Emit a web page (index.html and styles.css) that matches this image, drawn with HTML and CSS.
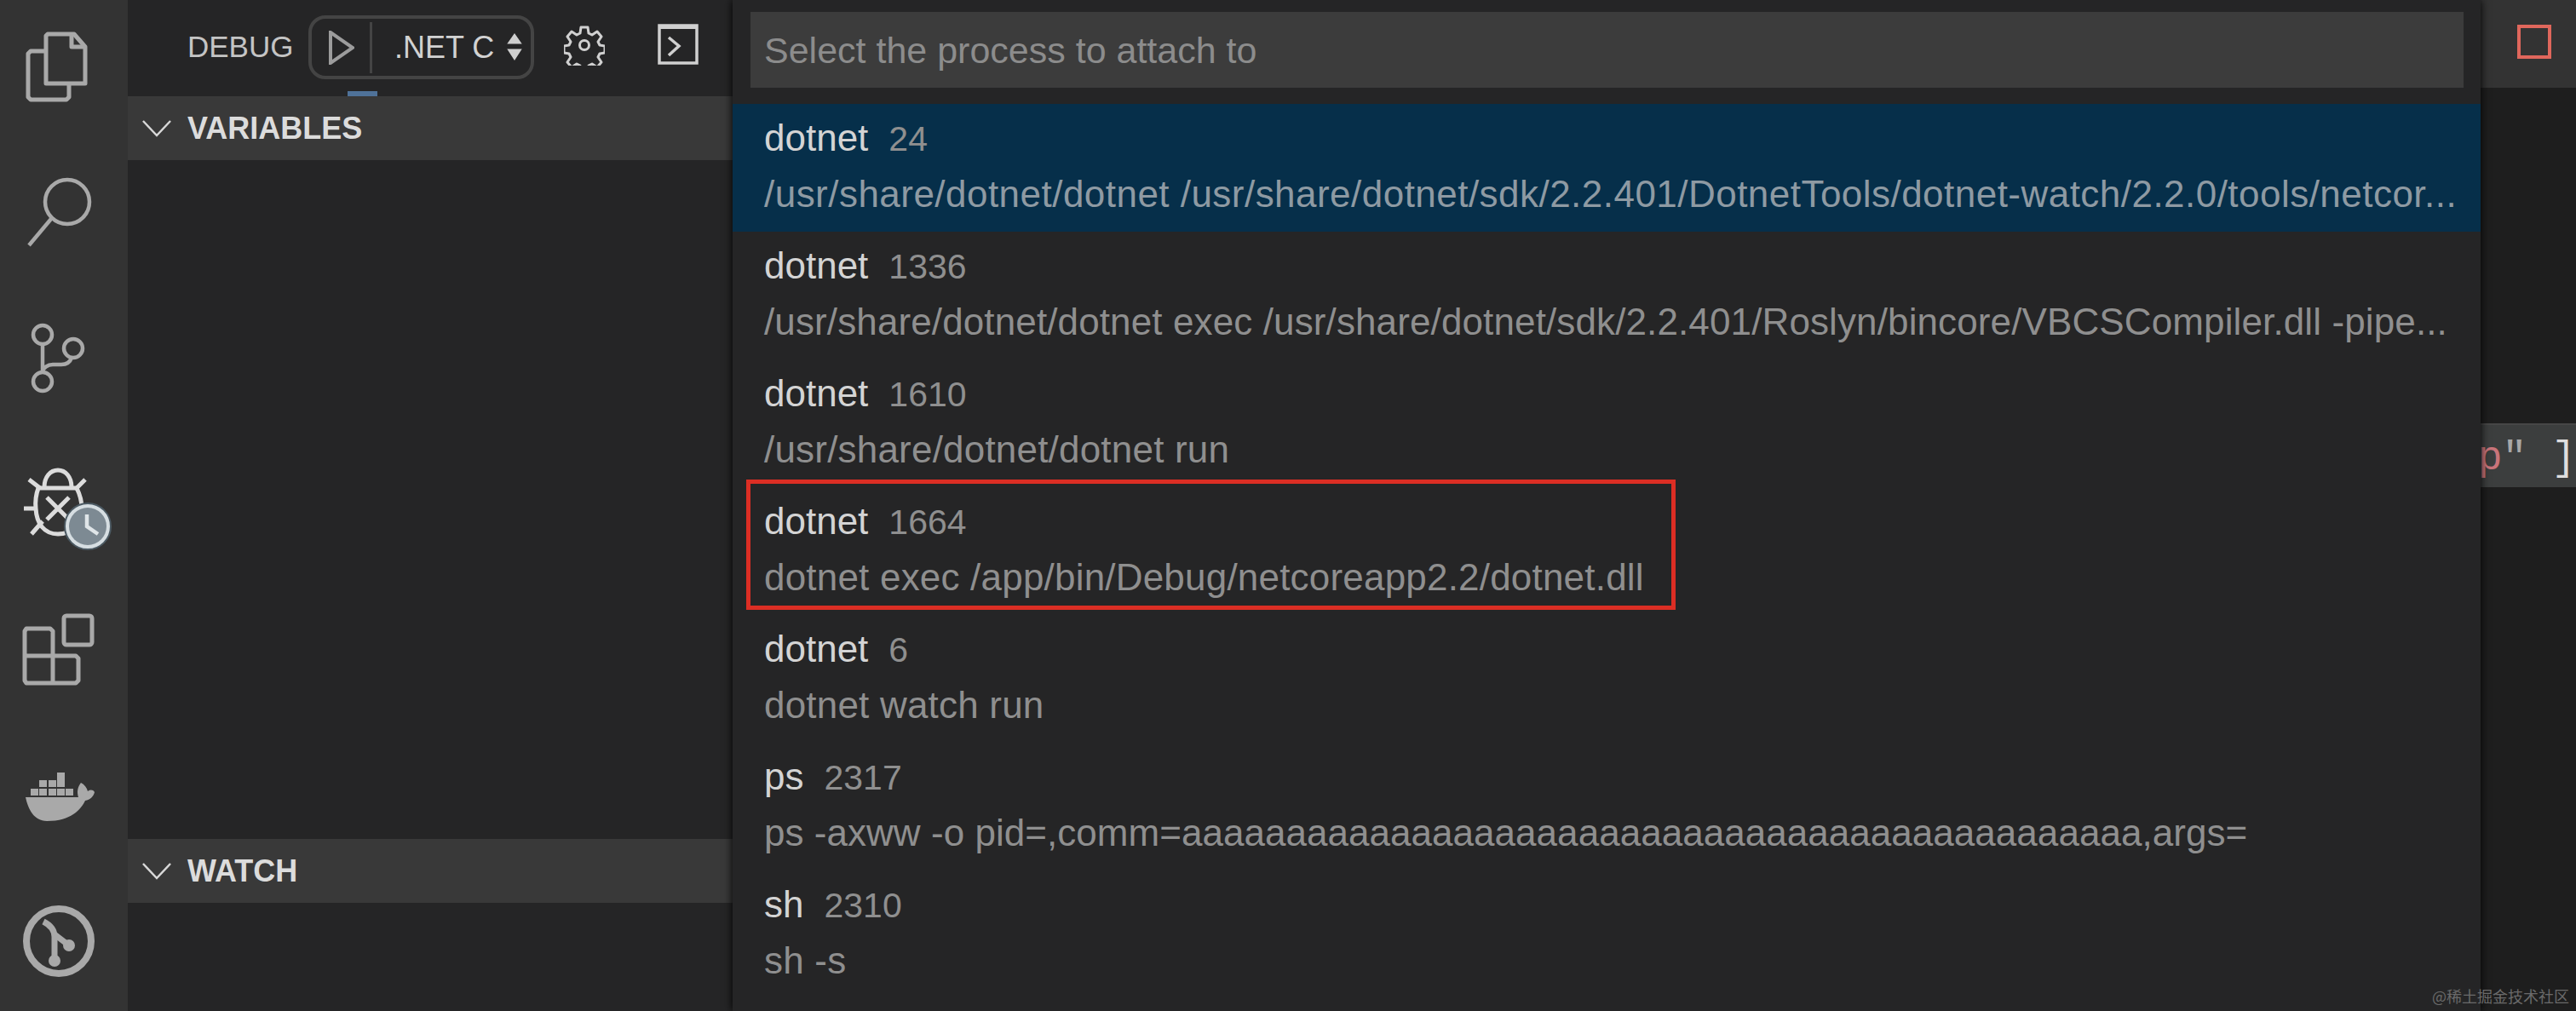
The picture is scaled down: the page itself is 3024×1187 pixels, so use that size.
FILE: index.html
```html
<!DOCTYPE html>
<html lang="en">
<head>
<meta charset="utf-8">
<title>Select the process to attach to</title>
<link rel="stylesheet" href="styles.css">
</head>
<body>
<div class="app">
  <nav class="activity">
    <svg class="act-icon" viewBox="0 0 150 100"><g class="ico"><path d="M56 11h31l13 15v43H54V13z"/><path d="M84 11v15h16"/><path d="M54 31H36l-3 3v51l3 3h42l3-3V69"/></g></svg>
    <svg class="act-icon" viewBox="0 0 150 100"><g class="ico thin"><circle cx="79" cy="37" r="26"/><path d="M60 57 34 88"/></g></svg>
    <svg class="act-icon" viewBox="0 0 150 100"><g class="ico thin"><circle cx="50" cy="22" r="11"/><circle cx="86" cy="38" r="11"/><circle cx="50" cy="77" r="11"/><path d="M50 33v33"/><path d="M84 49c-2 6-6 8-12 8H62c-6 0-12 4-12 9"/></g></svg>
    <svg class="act-icon" viewBox="0 0 150 100"><g class="ico bug"><path d="M52 30c0-12 7-20 16-20s16 8 16 20"/><path d="M45 31h45c4 8 6 15 6 24 0 18-12 30-28 30S43 73 42 55c-1-10 0-16 3-24z"/><path d="M34 21l13 10M100 21 88 33M28 55h14M37 85l13-15M55 42l26 26M81 42 55 68"/></g><circle cx="103" cy="76" r="27" class="clock-gap"/><circle cx="103" cy="76" r="22" class="clock"/><path class="clock-hand" d="M102 62v14l13 9"/></svg>
    <svg class="act-icon" viewBox="0 0 150 100"><g class="ico"><path d="M31 25h28l3 3v29h27l3 3v26l-3 3H31l-2-3V28z"/><path d="M29 57h33v32"/><rect x="75" y="10" width="33" height="34" rx="3"/></g></svg>
    <svg class="act-icon" viewBox="0 0 150 100"><g class="solid"><rect x="67" y="23" width="9" height="9"/><rect x="46" y="32" width="9" height="8"/><rect x="57" y="32" width="9" height="8"/><rect x="67" y="32" width="9" height="8"/><rect x="36" y="42" width="9" height="8"/><rect x="46" y="42" width="9" height="8"/><rect x="57" y="42" width="9" height="8"/><rect x="67" y="42" width="9" height="8"/><rect x="77" y="42" width="9" height="8"/><path d="M30 52H92C90 46 91 40 95 35C99 37 102 41 103 45C106 43 109 43 111 46C110 51 106 55 100 56C95 66 84 80 55 80C40 80 33 66 30 52z"/></g></svg>
    <svg class="act-icon" viewBox="0 0 150 100"><g class="ico wide"><circle cx="69" cy="50" r="38"/></g><g class="branch"><path d="M51 27c8 4 13 10 13 18v28"/><path d="M64 42l17 13"/></g><circle class="solid" cx="81" cy="55" r="7"/><circle class="solid" cx="64" cy="73" r="7"/></svg>
  </nav>

  <aside class="sidebar">
    <div class="toolbar">
      <span class="debug-title">DEBUG</span>
      <div class="launch">
        <svg class="play" viewBox="0 0 30 40"><path d="M2 2v36l26-18z"/></svg>
        <span class="launch-sep"></span>
        <span class="launch-name">.NET C</span>
        <svg class="updown" viewBox="0 0 20 34"><path d="M10 0l9 13H1zM1 19h18l-9 14z"/></svg>
      </div>
      <svg class="gear" viewBox="0 0 48 48"><path d="M20 3h8l1 7 4 2 6-4 5 6-4 6 2 4 6 1v8l-6 1-2 4 4 6-5 6-6-4-4 2-1 6h-8l-1-6-4-2-6 4-5-6 4-6-2-4-6-1v-8l6-1 2-4-4-6 5-6 6 4 4-2z"/><circle cx="24" cy="24" r="5.5"/></svg>
      <svg class="term" viewBox="0 0 48 48"><rect x="2" y="2" width="44" height="44"/><path class="term-top" d="M2 4h44"/><path d="M13 16l12 10-12 11"/></svg>
      <span class="tab-mark"></span>
    </div>
    <div class="section-head">
      <svg class="chev" viewBox="0 0 36 22"><path d="M1 2l17 18L35 2"/></svg>
      <span>VARIABLES</span>
    </div>
    <div class="section-body"></div>
    <div class="section-head">
      <svg class="chev" viewBox="0 0 36 22"><path d="M1 2l17 18L35 2"/></svg>
      <span>WATCH</span>
    </div>
    <div class="section-foot"></div>
  </aside>

  <main class="editor">
    <div class="tabs"><span class="red-square"></span></div>
    <div class="code-line"><span class="str">p</span><span class="quote">"</span><span class="bracket"> ]</span></div>
  </main>

  <section class="quick-pick">
    <div class="qp-input">Select the process to attach to</div>
    <div class="qp-row selected"><div class="qp-title">dotnet<span class="qp-pid">24</span></div><div class="qp-desc wider">/usr/share/dotnet/dotnet /usr/share/dotnet/sdk/2.2.401/DotnetTools/dotnet-watch/2.2.0/tools/netcor...</div></div>
    <div class="qp-row"><div class="qp-title">dotnet<span class="qp-pid">1336</span></div><div class="qp-desc tight">/usr/share/dotnet/dotnet exec /usr/share/dotnet/sdk/2.2.401/Roslyn/bincore/VBCSCompiler.dll -pipe...</div></div>
    <div class="qp-row"><div class="qp-title">dotnet<span class="qp-pid">1610</span></div><div class="qp-desc">/usr/share/dotnet/dotnet run</div></div>
    <div class="qp-row marked"><div class="qp-title">dotnet<span class="qp-pid">1664</span></div><div class="qp-desc">dotnet exec /app/bin/Debug/netcoreapp2.2/dotnet.dll</div><span class="red-box"></span></div>
    <div class="qp-row"><div class="qp-title">dotnet<span class="qp-pid">6</span></div><div class="qp-desc">dotnet watch run</div></div>
    <div class="qp-row"><div class="qp-title">ps<span class="qp-pid">2317</span></div><div class="qp-desc tighter">ps -axww -o pid=,comm=aaaaaaaaaaaaaaaaaaaaaaaaaaaaaaaaaaaaaaaaaaaaaa,args=</div></div>
    <div class="qp-row"><div class="qp-title">sh<span class="qp-pid">2310</span></div><div class="qp-desc">sh -s</div></div>
  </section>

  <span class="watermark">@稀土掘金技术社区</span>
</div>
</body>
</html>
```
FILE: styles.css
```css
* { box-sizing: border-box; }
html, body { margin: 0; background: #252526; }
.app {
  position: relative;
  display: flex;
  width: 3024px;
  height: 1187px;
  overflow: hidden;
  font-family: "Liberation Sans", Arial, sans-serif;
  color: #ccc;
}

/* activity bar */
.activity {
  flex: 0 0 150px;
  background: #333;
  display: flex;
  flex-direction: column;
  gap: 71px;
  padding-top: 29px;
}
.act-icon { display: block; width: 150px; height: 100px; flex: none; overflow: visible; }
.ico { fill: none; stroke: #a9a9a9; stroke-width: 5; stroke-linejoin: round; }
.ico.thin { stroke-width: 4.5; }
.ico.wide { stroke-width: 8; }
.ico.bug { stroke: #dcdcdc; stroke-width: 5; }
.clock-gap { fill: #d6dee2; stroke: #4c5a63; stroke-width: 2; }
.clock { fill: #7d8a93; }
.clock-hand { fill: none; stroke: #dfe5e8; stroke-width: 4.5; }
.solid { fill: #a9a9a9; }
.branch { fill: none; stroke: #a9a9a9; stroke-width: 7; }

/* sidebar */
.sidebar {
  flex: 0 0 710px;
  display: flex;
  flex-direction: column;
  background: #252526;
}
.toolbar {
  position: relative;
  flex: 0 0 113px;
  display: flex;
  align-items: flex-start;
  padding-left: 70px;
}
.debug-title { width: 142px; margin-top: 35px; font-size: 35px; line-height: 40px; color: #c4c4c4; }
.launch {
  width: 265px;
  height: 75px;
  margin-top: 18px;
  border: 4px solid #444;
  border-radius: 20px;
  display: flex;
  align-items: center;
  padding-left: 20px;
}
.play { width: 30px; height: 40px; flex: none; fill: none; stroke: #9c9c9c; stroke-width: 4; }
.launch-sep { width: 3px; height: 60px; margin: 0 26px 0 18px; background: #444; flex: none; }
.launch-name { width: 131px; flex: none; font-size: 36px; color: #d2d2d2; white-space: nowrap; }
.updown { width: 20px; height: 33px; flex: none; fill: #cfcfcf; }
.gear { width: 48px; height: 48px; margin: 29px 0 0 35px; flex: none; fill: none; stroke: #d0d0d0; stroke-width: 3; stroke-linejoin: round; }
.term { width: 48px; height: 48px; margin: 28px 0 0 62px; flex: none; fill: none; stroke: #d0d0d0; stroke-width: 3.5; }
.term-top { stroke-width: 4; }
.tab-mark { position: absolute; left: 258px; top: 107px; width: 35px; height: 6px; background: #4f7299; }
.section-head {
  flex: 0 0 75px;
  display: flex;
  align-items: center;
  gap: 19px;
  padding-left: 17px;
  background: #393939;
  color: #dcdcdc;
  font-size: 36px;
  font-weight: 700;
}
.chev { width: 34px; height: 21px; fill: none; stroke: #d8d8d8; stroke-width: 2.6; flex: none; }
.section-body { flex: 1; }
.section-foot { flex: 0 0 127px; }

/* editor behind the picker */
.editor { flex: 1; background: #1e1e1e; display: flex; flex-direction: column; }
.tabs {
  flex: 0 0 103px;
  background: #333;
  display: flex;
  justify-content: flex-end;
  padding: 29px 29px 0 0;
}
.red-square { width: 40px; height: 40px; border: 4px solid #e0675c; }
.code-line {
  margin-top: 394px;
  height: 75px;
  background: #3c3e3e;
  border-top: 2px solid #474747;
  font-family: "Liberation Mono", monospace;
  font-size: 48px;
  line-height: 78px;
  white-space: pre;
  text-align: right;
}
.str { color: #c9747a; }
.quote { color: #a8a8a8; }
.bracket { color: #dedede; }

/* quick pick overlay */
.quick-pick {
  position: absolute;
  left: 860px;
  top: 0;
  width: 2052px;
  height: 1187px;
  background: #252526;
  box-shadow: 0 0 10px #000;
  padding-top: 14px;
}
.qp-input {
  height: 89px;
  margin: 0 20px 19px 21px;
  padding-left: 16px;
  background: #3c3c3c;
  color: #8c8c8c;
  font-size: 43px;
  line-height: 91px;
}
.qp-row { position: relative; height: 150px; padding: 7px 0 0 37px; }
.qp-row.selected { background: #062f4a; }
.qp-title { height: 66px; font-size: 44px; line-height: 65px; color: #d4d4d4; white-space: nowrap; }
.qp-pid { margin-left: 24px; font-size: 41px; color: #8f8f8f; }
.qp-desc {
  height: 65px;
  font-size: 44px;
  line-height: 65px;
  letter-spacing: 0.2px;
  color: #8f8f8f;
  white-space: nowrap;
}
.qp-desc.wider { letter-spacing: 0.47px; }
.qp-desc.tight { letter-spacing: 0.12px; }
.qp-desc.tighter { letter-spacing: 0.04px; }
.selected .qp-desc { color: #8e9aa3; }
.red-box {
  position: absolute;
  left: 16px;
  top: -9px;
  width: 1091px;
  height: 153px;
  border: 5px solid #dc2e24;
}

.watermark {
  position: absolute;
  right: 8px;
  bottom: 6px;
  font-family: "Noto Sans CJK SC", sans-serif;
  font-size: 18px;
  line-height: 24px;
  color: #6a6a6a;
}
```
